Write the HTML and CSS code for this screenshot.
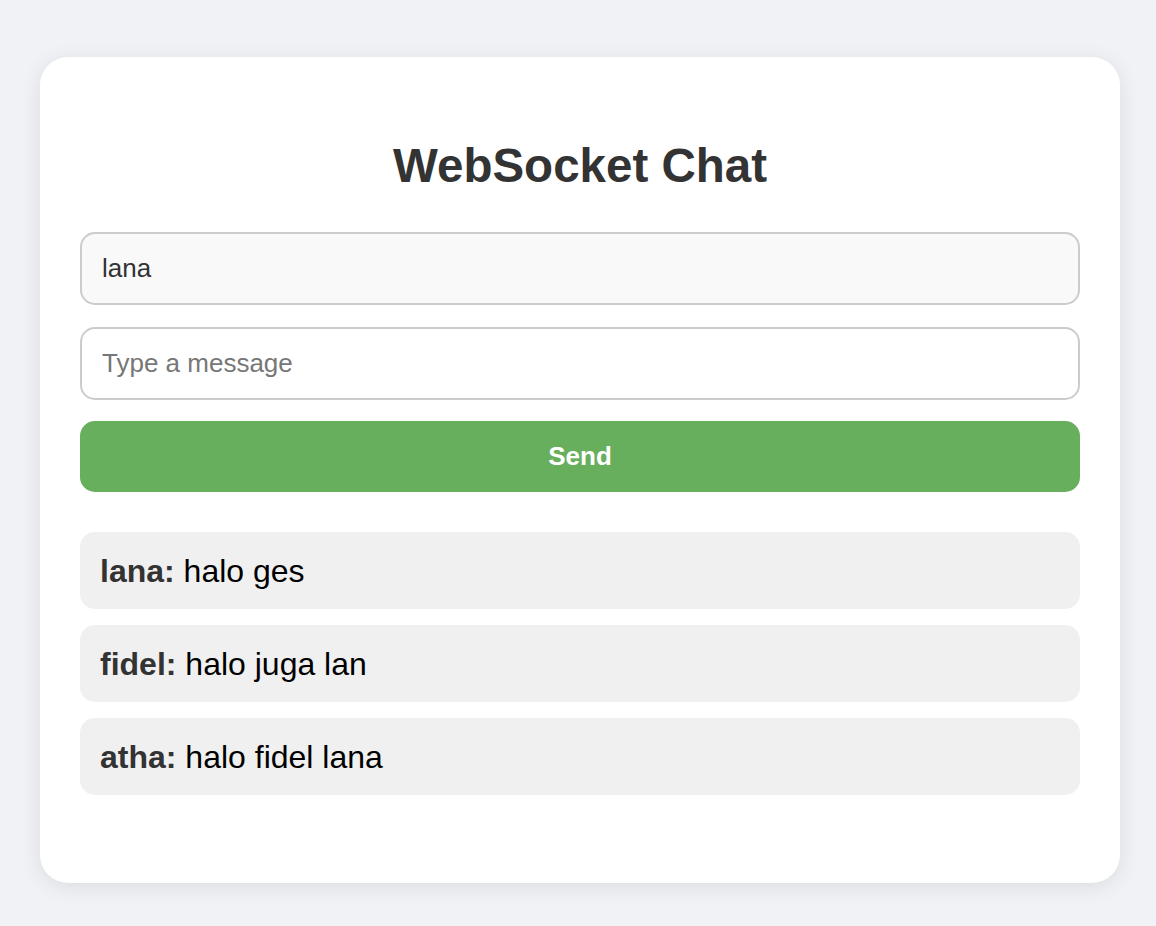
FILE: index.html
```html
<!DOCTYPE html>
<html>
<head>
<meta charset="utf-8">
<title>WebSocket Chat</title>
<link rel="stylesheet" href="styles.css">
</head>
<body>
<div class="card">
  <h1 class="title">WebSocket Chat</h1>
  <input class="field field-name" type="text" value="lana" readonly>
  <input class="field" type="text" placeholder="Type a message">
  <button class="send">Send</button>
  <div class="messages">
    <div class="msg"><strong>lana:</strong> halo ges</div>
    <div class="msg"><strong>fidel:</strong> halo juga lan</div>
    <div class="msg"><strong>atha:</strong> halo fidel lana</div>
  </div>
</div>
</body>
</html>
```

FILE: styles.css
```css
html, body {
  margin: 0;
  background: #f0f2f5;
}
body {
  padding: 57px 36px 43px 40px;
  font-family: "Liberation Sans", Arial, sans-serif;
}
.card {
  background: #fff;
  border-radius: 28px;
  box-shadow: 0 4px 22px rgba(0, 0, 0, 0.09);
  padding: 40px 40px 88px;
  display: flex;
  flex-direction: column;
}
.title {
  margin: 41px 0 39px;
  text-align: center;
  font-size: 47.5px;
  font-weight: bold;
  color: #333;
  line-height: 55px;
}
.field {
  box-sizing: border-box;
  height: 73px;
  width: 100%;
  border: 2px solid #cccccc;
  border-radius: 15px;
  padding: 0 20px;
  font-family: "Liberation Sans", Arial, sans-serif;
  font-size: 26px;
  color: #333;
  background: #fff;
  outline: none;
  margin: 0 0 22px;
}
.field-name {
  background: #f9f9f9;
}
.field::placeholder {
  color: #777;
}
.field + .field {
  margin-bottom: 21px;
}
.send {
  height: 71px;
  width: 100%;
  border: none;
  border-radius: 15px;
  background: #67ae5d;
  color: #fff;
  font-family: "Liberation Sans", Arial, sans-serif;
  font-size: 26px;
  font-weight: bold;
  cursor: pointer;
}
.messages {
  margin-top: 40px;
  display: flex;
  flex-direction: column;
  gap: 16px;
}
.msg {
  box-sizing: border-box;
  height: 77px;
  display: flex;
  align-items: center;
  padding: 2px 20px 0;
  background: #f0f0f0;
  border-radius: 15px;
  font-size: 32px;
  color: #000;
  white-space: pre;
}
.msg strong {
  color: #333;
}
```
